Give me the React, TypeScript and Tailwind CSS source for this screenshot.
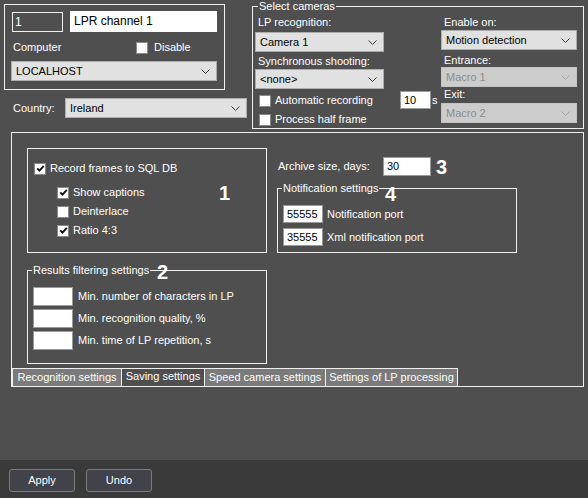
import React from "react";

const PANEL = "bg-[#4f4f4f]";

const Chevron: React.FC<{ disabled?: boolean }> = ({ disabled }) => (
  <svg width="9" height="5" viewBox="0 0 9 5" className="shrink-0">
    <path d="M0.5 0.5 L4.5 4.5 L8.5 0.5" fill="none" stroke={disabled ? "#a8a8a8" : "#3a3a3a"} strokeWidth="1" />
  </svg>
);

interface SelectProps {
  text: string;
  width: string;
  disabled?: boolean;
  className?: string;
}

const Select: React.FC<SelectProps> = ({ text, width, disabled, className = "" }) => (
  <div
    className={`${width} h-[20px] flex items-center justify-between pl-[4px] pr-[6px] border ${
      disabled ? "bg-[#cccccc] border-[#c4c4c4] text-[#8d8d8d]" : "bg-[#e1e1e1] border-[#adadad] text-black"
    } ${className}`}
  >
    <span className="whitespace-nowrap">{text}</span>
    <Chevron disabled={disabled} />
  </div>
);

const Check: React.FC<{ checked?: boolean }> = ({ checked }) => (
  <span className="w-[12px] h-[12px] bg-white border border-[#8a8a8a] flex items-center justify-center shrink-0">
    {checked && (
      <svg width="9" height="9" viewBox="0 0 9 9">
        <path d="M1.2 4.3 L3.5 6.6 L7.8 1.8" fill="none" stroke="#111" strokeWidth="1.9" />
      </svg>
    )}
  </span>
);

const CheckRow: React.FC<{ label: string; checked?: boolean; className?: string }> = ({ label, checked, className = "" }) => (
  <div className={`flex items-center h-[13px] gap-[4px] ${className}`}>
    <Check checked={checked} />
    <span className="whitespace-nowrap">{label}</span>
  </div>
);

const Field: React.FC<{ value?: string; width: string; height?: string }> = ({ value = "", width, height = "h-[19px]" }) => (
  <div className={`${width} ${height} bg-white border border-[#9a9a9a] text-black flex items-center pl-[3px] shrink-0`}>
    {value}
  </div>
);

const Legend: React.FC<{ text?: string; className?: string }> = ({ text, className = "" }) => (
  <span className={`absolute -top-[7px] left-[4px] ${PANEL} px-[1px] leading-[13px] whitespace-nowrap ${className}`}>
    {text}
  </span>
);

const Mark: React.FC<{ n: string; className: string }> = ({ n, className }) => (
  <span className={`absolute font-bold text-[20px] leading-none text-white ${className}`}>{n}</span>
);

const tabs = [
  { label: "Recognition settings", w: "w-[110px]" },
  { label: "Saving settings", w: "w-[84px]", active: true },
  { label: "Speed camera settings", w: "w-[122px]" },
  { label: "Settings of LP processing", w: "w-[133px]" },
];

export default function App() {
  return (
    <div
      className={`w-[588px] h-[498px] ${PANEL} flex flex-col overflow-hidden text-white text-[11px] leading-[13px] font-['Liberation_Sans',Arial,sans-serif]`}
    >
      <div className="h-[460px] flex flex-col">
        {/* top area */}
        <div className="flex h-[129px]">
          <div className="w-[248px] flex flex-col pl-[4px] pt-[4px]">
            <div className="w-[221px] h-[86px] border border-[#f0f0f0] flex flex-col pl-[6px] pt-[6px]">
              <div className="flex items-start gap-[7px]">
                <div className="w-[51px] h-[20px] mt-[1px] ml-[1px] border border-[#f0f0f0] flex items-center pl-[2px] text-[12px]">
                  1
                </div>
                <div className="w-[147px] h-[21px] bg-white text-black flex items-center pl-[4px] text-[12px]">
                  LPR channel 1
                </div>
              </div>
              <div className="flex items-center h-[13px] mt-[9px]">
                <span className="w-[125px] pl-[2px]">Computer</span>
                <Check />
                <span className="ml-[6px]">Disable</span>
              </div>
              <Select text="LOCALHOST" width="w-[206px]" className="mt-[7px]" />
            </div>
            <div className="flex items-center h-[20px] mt-[8px]">
              <span className="w-[61px] pl-[9px]">Country:</span>
              <Select text="Ireland" width="w-[182px]" />
            </div>
          </div>

          {/* select cameras */}
          <div className="relative mt-[6px] ml-[4px] w-[332px] h-[123px] border border-[#f0f0f0] flex pl-[2px]">
            <Legend text="Select cameras" className="left-[5px]" />
            <div className="w-[145px] flex flex-col">
              <span className="mt-[9px] pl-[3px]">LP recognition:</span>
              <Select text="Camera 1" width="w-[129px]" className="mt-[3px]" />
              <span className="mt-[3px] pl-[3px]">Synchronous shooting:</span>
              <Select text="<none>" width="w-[129px]" className="mt-[1px]" />
              <CheckRow label="Automatic recording" className="mt-[5px] ml-[4px]" />
              <CheckRow label="Process half frame" className="mt-[6px] ml-[4px]" />
            </div>
            <div className="w-[41px] flex items-start pt-[84px]">
              <Field value="10" width="w-[31px]" height="h-[18px]" />
              <span className="ml-[1px] mt-[3px]">s</span>
            </div>
            <div className="w-[137px] flex flex-col">
              <span className="mt-[9px] pl-[3px]">Enable on:</span>
              <Select text="Motion detection" width="w-[136px]" className="mt-[1px]" />
              <span className="mt-[4px] pl-[3px]">Entrance:</span>
              <Select text="Macro 1" width="w-[136px]" disabled />
              <span className="mt-[1px] pl-[3px]">Exit:</span>
              <Select text="Macro 2" width="w-[136px]" disabled className="mt-[2px]" />
            </div>
          </div>
        </div>

        {/* main panel */}
        <div className="ml-[11px] mt-[3px] w-[573px] h-[255px] border border-[#f0f0f0] flex flex-col">
          <div className="flex pl-[15px] pt-[15px]">
            <div className="w-[240px] flex flex-col">
              <div className="relative h-[105px] border border-[#f0f0f0] flex flex-col pl-[6px]">
                <Legend className="w-[3px] h-[3px] left-[5px] -top-[2px] px-0" />
                <CheckRow label="Record frames to SQL DB" checked className="mt-[13px]" />
                <CheckRow label="Show captions" checked className="mt-[11px] ml-[23px]" />
                <CheckRow label="Deinterlace" className="mt-[6px] ml-[23px]" />
                <CheckRow label="Ratio 4:3" checked className="mt-[6px] ml-[23px]" />
                <Mark n="1" className="left-[191px] top-[34px]" />
              </div>
              <div className="relative mt-[17px] h-[94px] border border-[#f0f0f0] flex flex-col gap-[3px] pl-[5px] pt-[16px]">
                <Legend text="Results filtering settings" />
                <Mark n="2" className="left-[129px] -top-[9px]" />
                {[
                  "Min. number of characters in LP",
                  "Min. recognition quality, %",
                  "Min. time of LP repetition, s",
                ].map((t) => (
                  <div key={t} className="flex items-center gap-[5px]">
                    <Field width="w-[40px]" />
                    <span className="whitespace-nowrap">{t}</span>
                  </div>
                ))}
              </div>
            </div>

            <div className="ml-[10px] flex flex-col">
              <div className="flex items-center mt-[9px] h-[19px]">
                <span className="w-[106px] pl-[1px]">Archive size, days:</span>
                <Field value="30" width="w-[48px]" />
                <span className="ml-[5px] font-bold text-[20px] leading-none">3</span>
              </div>
              <div className="relative mt-[12px] w-[240px] h-[65px] border border-[#f0f0f0] flex flex-col gap-[5px] pl-[5px] pt-[16px]">
                <Legend text="Notification settings" />
                <Mark n="4" className="left-[107px] -top-[5px]" />
                <div className="flex items-center gap-[4px]">
                  <Field value="55555" width="w-[40px]" height="h-[18px]" />
                  <span>Notification port</span>
                </div>
                <div className="flex items-center gap-[4px]">
                  <Field value="35555" width="w-[40px]" height="h-[18px]" />
                  <span>Xml notification port</span>
                </div>
              </div>
            </div>
          </div>

          <div className="mt-auto flex h-[18px]">
            {tabs.map((t, i) => (
              <div
                key={t.label}
                className={`${t.w} h-[18px] border-t border-l border-r border-[#f0f0f0] flex justify-center whitespace-nowrap ${
                  i > 0 ? "-ml-px" : ""
                } ${t.active ? `${PANEL} items-start pt-[1px]` : "bg-[#7a7a7a] items-center"}`}
              >
                {t.label}
              </div>
            ))}
          </div>
        </div>
      </div>

      {/* bottom bar */}
      <div className="h-[38px] bg-[#3a3a3a] flex gap-[11px] pl-[9px] pt-[9px]">
        {["Apply", "Undo"].map((b) => (
          <div
            key={b}
            className="w-[66px] h-[23px] bg-[#42424a] border border-[#7c7c7c] rounded-[3px] flex items-center justify-center"
          >
            {b}
          </div>
        ))}
      </div>
    </div>
  );
}
